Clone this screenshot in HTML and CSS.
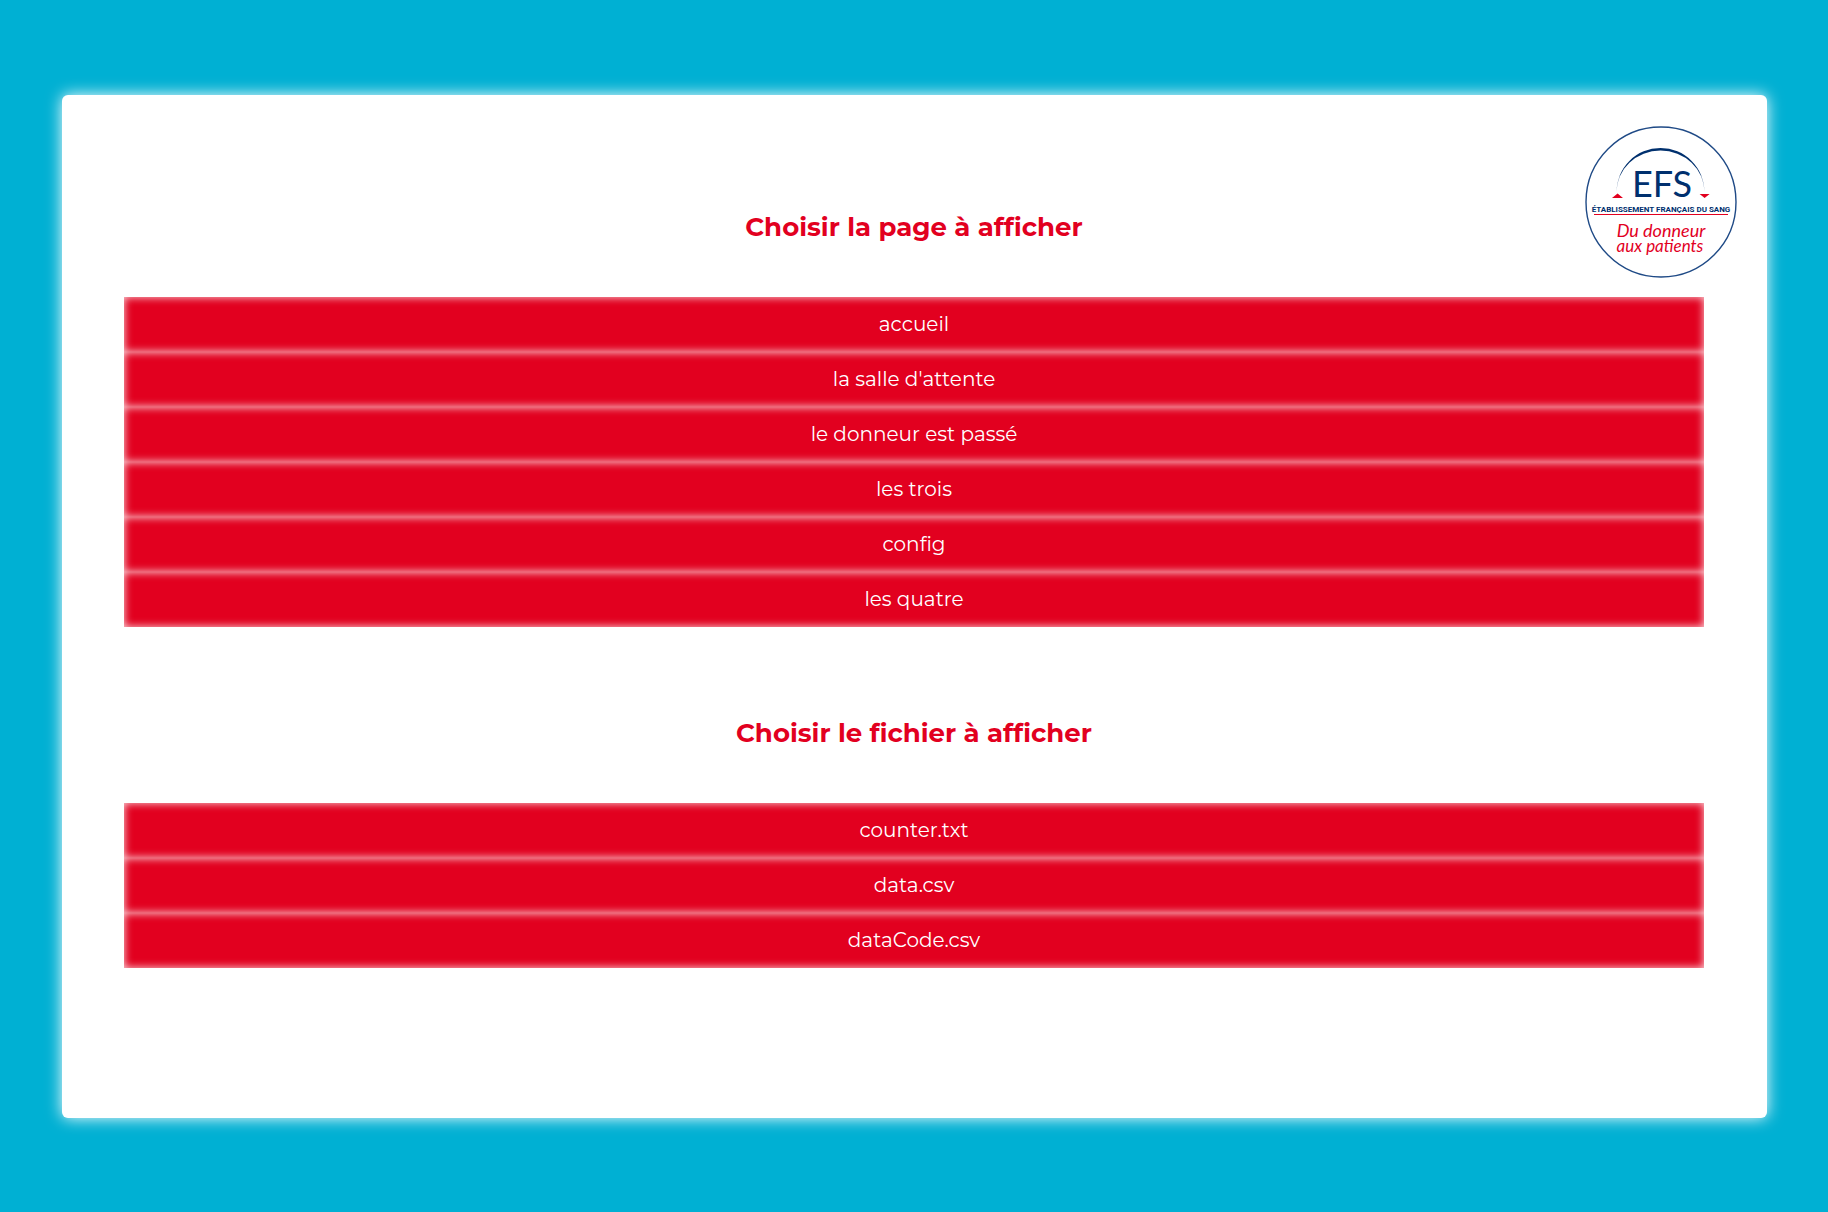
FILE: index.html
```html
<!DOCTYPE html>
<html lang="fr">
<head>
  <meta charset="utf-8">
  <meta name="viewport" content="width=device-width, initial-scale=1">
  <title>Choisir la page à afficher</title>
  <link rel="stylesheet" href="styles.css">
</head>
<body>
  <main class="card">
    <svg class="logo" viewBox="0 0 152 152" role="img" aria-label="EFS">
      <circle class="logo-ring" cx="76" cy="76" r="75"/>
      <path class="logo-blue" d="M31.5 66A44 44 0 0 1 119.500 66A43.500 41 0 0 0 31.500 66Z"/>
      <path class="logo-red" d="M27 72L32.6 67.6L38 72ZM114.6 68H124.6L119.6 72Z"/>
      <text class="logo-blue logo-efs" x="77" y="71">EFS</text>
      <text class="logo-blue logo-name" x="76" y="86">ÉTABLISSEMENT FRANÇAIS DU SANG</text>
      <path class="logo-rule" d="M9 88.500H143"/>
      <text class="logo-red logo-motto"><tspan x="76" y="111">Du donneur</tspan><tspan class="logo-motto-small" x="75" y="126">aux patients</tspan></text>
    </svg>
    <section class="group">
      <h1 class="title">Choisir la page à afficher</h1>
      <nav class="list" aria-label="Pages">
        <a class="item" href="#accueil">accueil</a>
        <a class="item" href="#attente">la salle d'attente</a>
        <a class="item" href="#passe">le donneur est passé</a>
        <a class="item" href="#trois">les trois</a>
        <a class="item" href="#config">config</a>
        <a class="item" href="#quatre">les quatre</a>
      </nav>
    </section>
    <section class="group">
      <h2 class="title">Choisir le fichier à afficher</h2>
      <nav class="list" aria-label="Fichiers">
        <a class="item" href="#counter">counter.txt</a>
        <a class="item" href="#data">data.csv</a>
        <a class="item" href="#datacode">dataCode.csv</a>
      </nav>
    </section>
  </main>
</body>
</html>
```
FILE: styles.css
```css
* {
  box-sizing: border-box;
}

body {
  display: flex;
  min-height: 100vh;
  margin: 0;
  padding: 95px 61px 94px 62px;
  background: #00b0d3;
  font-family: Montserrat, Inter, sans-serif;
}

.card {
  position: relative;
  flex: 1;
  padding: 26px 63px 26px 62px;
  border-radius: 6px;
  background: #fff;
  box-shadow: 0 0 16px #fff;
}

.logo {
  position: absolute;
  top: 31px;
  right: 30px;
  width: 152px;
  height: 152px;
}

.logo-ring {
  fill: none;
  stroke: #1f4a86;
  stroke-width: 1.4;
}

.logo text {
  text-anchor: middle;
}

.logo-blue {
  fill: #00306e;
}

.logo-red {
  fill: #e2001f;
}

.logo-rule {
  stroke: #e2001f;
}

.logo-efs {
  font: 36px Lato, sans-serif;
}

.logo-name {
  font: bold 8px Roboto, sans-serif;
}

.logo-motto {
  font: italic 18px Lato, cursive;
}

.logo-motto-small {
  font-size: 17px;
}

.title {
  margin: 88px 0 52px;
  color: #e2001f;
  font-size: 26px;
  font-weight: 700;
  line-height: 36px;
  text-align: center;
}

.list {
  display: flex;
  flex-direction: column;
}

.item {
  background: #e2001f;
  box-shadow: inset 0 0 8px rgba(255, 255, 255, 0.9);
  color: #fff;
  font-size: 20px;
  font-weight: 400;
  line-height: 55px;
  text-align: center;
  text-decoration: none;
}
```
